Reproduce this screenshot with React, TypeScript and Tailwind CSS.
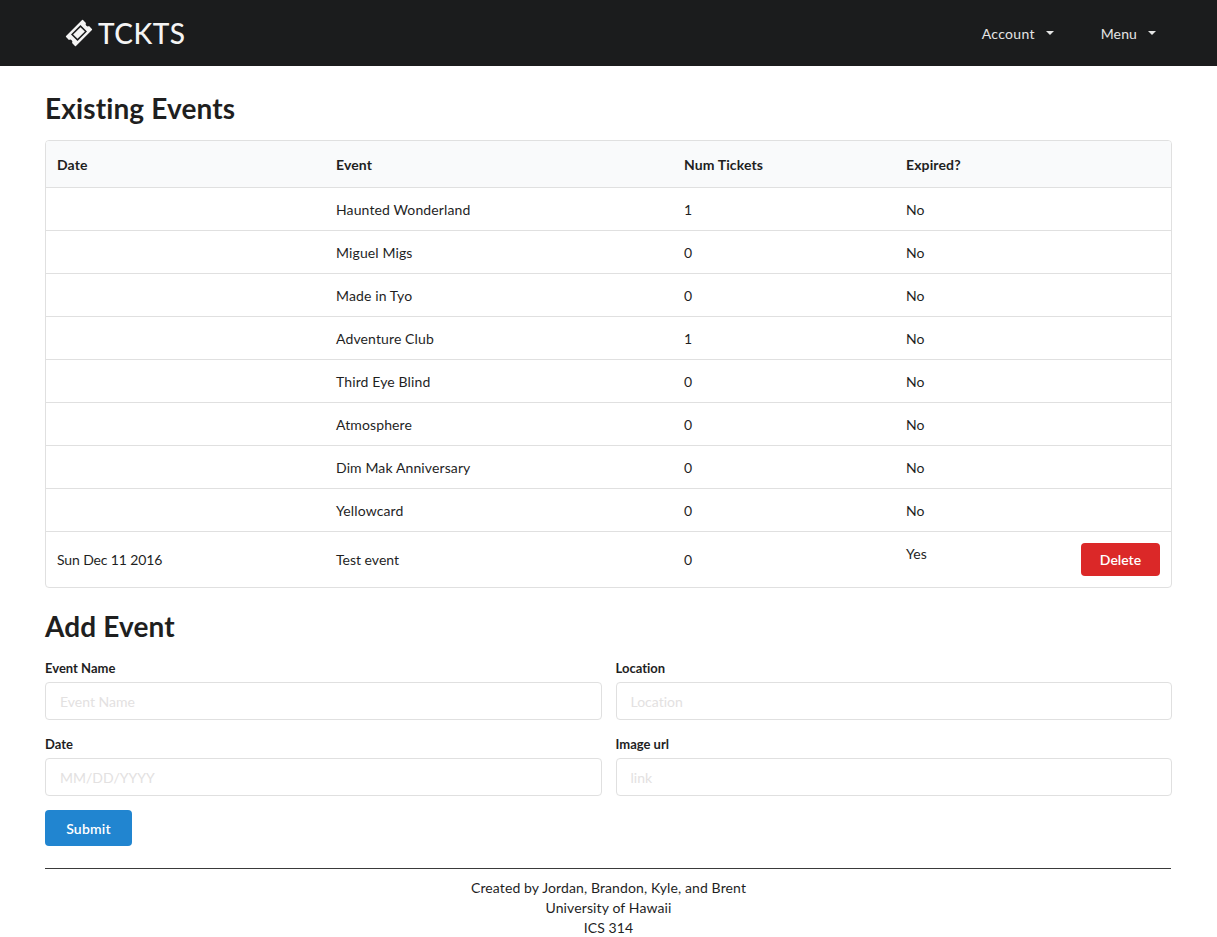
import React from 'react';

const font = "font-['Lato','Open_Sans',sans-serif]";

interface EventRow {
  date: string;
  name: string;
  tickets: number;
  expired: string;
}

const events: EventRow[] = [
  { date: '', name: 'Haunted Wonderland', tickets: 1, expired: 'No' },
  { date: '', name: 'Miguel Migs', tickets: 0, expired: 'No' },
  { date: '', name: 'Made in Tyo', tickets: 0, expired: 'No' },
  { date: '', name: 'Adventure Club', tickets: 1, expired: 'No' },
  { date: '', name: 'Third Eye Blind', tickets: 0, expired: 'No' },
  { date: '', name: 'Atmosphere', tickets: 0, expired: 'No' },
  { date: '', name: 'Dim Mak Anniversary', tickets: 0, expired: 'No' },
  { date: '', name: 'Yellowcard', tickets: 0, expired: 'No' },
];

const TicketIcon = () => (
  <svg width="30" height="30" viewBox="0 0 30 30" className="shrink-0">
    <g transform="rotate(-45 15 15)">
      <path
        fillRule="evenodd"
        fill="#f4f4f4"
        d="M3 8.7q0-.7.7-.7h22.6q.7 0 .7.7v4.1a2.3 2.3 0 0 0 0 4.4v4.1q0 .7-.7.7H3.700q-.7 0-.7-.7v-4.100a2.300 2.300 0 0 0 0-4.400zM8.300 10.400v9.200h13.400v-9.200z"
      />
      <rect x="9.800" y="11.900" width="10.400" height="6.200" fill="#f4f4f4" />
    </g>
  </svg>
);

const Caret = () => (
  <span className="ml-[11px] mb-[2px] inline-block h-0 w-0 border-x-[4px] border-t-[4px] border-x-transparent border-t-[#e4e4e4]" />
);

const Field = ({ label, placeholder }: { label: string; placeholder: string }) => (
  <div className="flex-1">
    <label className="mb-[6px] block h-[16px] text-[13px] leading-[16px] font-bold tracking-normal text-[#1f1f1f]">{label}</label>
    <input
      placeholder={placeholder}
      className="h-[38px] w-full rounded-[4px] border border-[#e0e0e0] bg-white px-[14px] text-[14px] tracking-normal outline-none placeholder:text-[#e3e1e1]"
    />
  </div>
);

export default function App() {
  return (
    <div className={`${font} min-h-[937px] bg-white text-[14px] leading-[20px] tracking-[0.12px] text-[#1f1f1f] [font-variant-ligatures:none]`}>
      <nav className="flex h-[66px] items-center justify-between bg-[#1b1c1d] pl-[64px] pr-[61px]">
        <div className="flex items-center gap-[4px]">
          <TicketIcon />
          <span className="text-[28px] leading-none font-medium tracking-[0.5px] text-[#f4f4f4]">TCKTS</span>
        </div>
        <div className="flex items-center gap-[47px] pt-[1px] text-[#e4e4e4]">
          <span className="flex items-center tracking-[0.3px]">Account<Caret /></span>
          <span className="flex items-center">Menu<Caret /></span>
        </div>
      </nav>

      <main className="px-[45px] pt-[26px]">
        <h1 className="mb-[15px] h-[33px] text-[28px] leading-[33px] font-bold tracking-[0.13px]">Existing Events</h1>

        <div className="overflow-hidden rounded-[4px] border border-[#e0e0e0]">
          <table className="w-full table-fixed border-collapse">
            <thead>
              <tr className="h-[46px] border-b border-[#e0e0e0] bg-[#f9fafb] text-left">
                <th className="w-[279px] px-[11px] pt-[2px] font-bold">Date</th>
                <th className="w-[348px] px-[11px] pt-[2px] font-bold">Event</th>
                <th className="w-[222px] px-[11px] pt-[2px] font-bold">Num Tickets</th>
                <th className="px-[11px] pt-[2px] font-bold">Expired?</th>
              </tr>
            </thead>
            <tbody>
              {events.map((e) => (
                <tr key={e.name} className="h-[43px] border-b border-[#e0e0e0]">
                  <td className="px-[11px] pt-[2px]">{e.date}</td>
                  <td className="px-[11px] pt-[2px]">{e.name}</td>
                  <td className="px-[11px] pt-[2px]">{e.tickets}</td>
                  <td className="px-[11px] pt-[2px]">{e.expired}</td>
                </tr>
              ))}
              <tr className="h-[56px]">
                <td className="px-[11px] pt-[1px] tracking-[-0.13px]">Sun Dec 11 2016</td>
                <td className="px-[11px] pt-[1px] tracking-normal">Test event</td>
                <td className="px-[11px] pt-[1px]">0</td>
                <td className="px-[11px]">
                  <div className="flex items-start justify-between">
                    <span className="pt-[1px]">Yes</span>
                    <button className="h-[33px] w-[79px] rounded-[4px] bg-[#db2828] pt-[1px] font-semibold tracking-normal text-white">Delete</button>
                  </div>
                </td>
              </tr>
            </tbody>
          </table>
        </div>

        <h1 className="mt-[22px] mb-[17px] h-[33px] text-[28px] leading-[33px] font-bold tracking-[0.13px]">Add Event</h1>

        <div className="flex gap-[14px]">
          <Field label="Event Name" placeholder="Event Name" />
          <Field label="Location" placeholder="Location" />
        </div>
        <div className="mt-[16px] flex gap-[14px]">
          <Field label="Date" placeholder="MM/DD/YYYY" />
          <Field label="Image url" placeholder="link" />
        </div>
        <button className="mt-[14px] h-[36px] w-[87px] rounded-[4px] bg-[#2185d0] pt-[1px] font-semibold tracking-[0.2px] text-white">Submit</button>

        <hr className="mt-[22px] mr-[1px] border-t border-[#3a3a3a]" />
        <footer className="pt-[9px] text-center">
          <div>Created by Jordan, Brandon, Kyle, and Brent</div>
          <div>University of Hawaii</div>
          <div>ICS 314</div>
        </footer>
      </main>
    </div>
  );
}
